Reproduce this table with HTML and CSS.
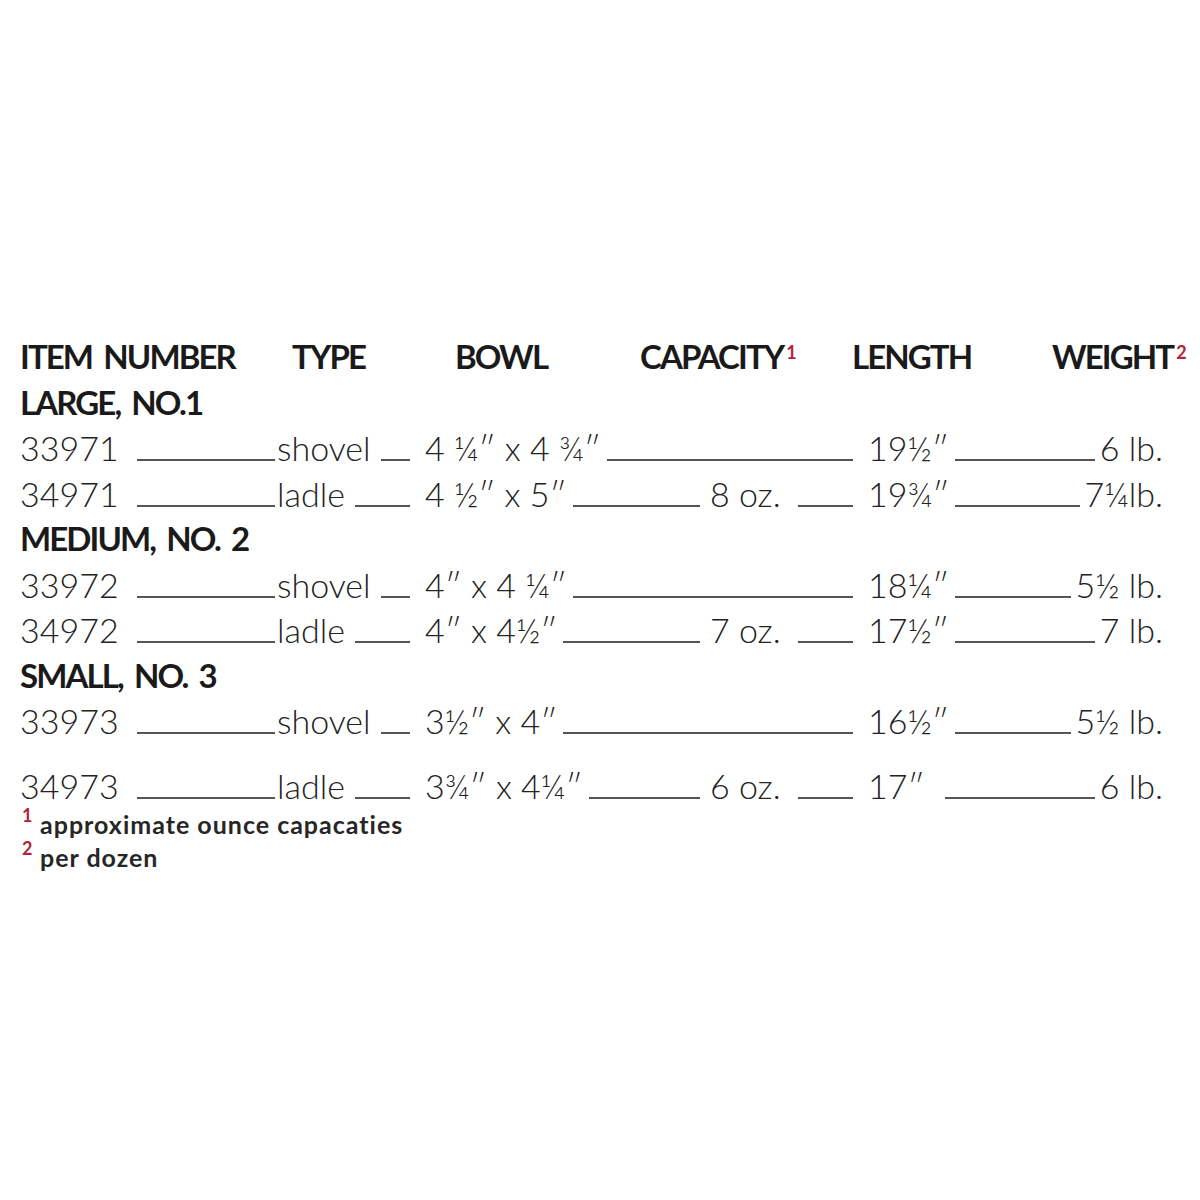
FILE: index.html
```html
<!DOCTYPE html>
<html lang="en">
<head>
<meta charset="utf-8">
<title>Ladle and shovel sizes</title>
<link rel="stylesheet" href="styles.css">
</head>
<body>
<div class="sheet">
  <div class="head">
    <span class="h-num">ITEM NUMBER</span>
    <span class="h-type">TYPE</span>
    <span class="h-bowl">BOWL</span>
    <span class="h-cap">CAPACITY<sup class="mark">1</sup></span>
    <span class="h-len">LENGTH</span>
    <span class="h-wt">WEIGHT<sup class="mark">2</sup></span>
  </div>

  <div class="group">LARGE, NO.1</div>
  <div class="row">
    <span class="num">33971</span>
    <span class="type"><i class="rule lead"></i>shovel<i class="rule after-type"></i></span>
    <span class="bowl wide">4 ¼″ x 4 ¾″<i class="rule after-bowl"></i></span>
    <span class="len">19½″<i class="rule mid"></i>6 lb.</span>
  </div>
  <div class="row">
    <span class="num">34971</span>
    <span class="type"><i class="rule lead"></i>ladle<i class="rule after-type"></i></span>
    <span class="bowl">4 ½″ x 5″<i class="rule after-bowl"></i></span>
    <span class="cap">8 oz.<i class="rule after-cap"></i></span>
    <span class="len">19¾″<i class="rule mid"></i>7¼lb.</span>
  </div>

  <div class="group">MEDIUM, NO. 2</div>
  <div class="row">
    <span class="num">33972</span>
    <span class="type"><i class="rule lead"></i>shovel<i class="rule after-type"></i></span>
    <span class="bowl wide">4″ x 4 ¼″<i class="rule after-bowl"></i></span>
    <span class="len">18¼″<i class="rule mid"></i>5½ lb.</span>
  </div>
  <div class="row">
    <span class="num">34972</span>
    <span class="type"><i class="rule lead"></i>ladle<i class="rule after-type"></i></span>
    <span class="bowl">4″ x 4½″<i class="rule after-bowl"></i></span>
    <span class="cap">7 oz.<i class="rule after-cap"></i></span>
    <span class="len">17½″<i class="rule mid"></i>7 lb.</span>
  </div>

  <div class="group">SMALL, NO. 3</div>
  <div class="row">
    <span class="num">33973</span>
    <span class="type"><i class="rule lead"></i>shovel<i class="rule after-type"></i></span>
    <span class="bowl wide">3½″ x 4″<i class="rule after-bowl"></i></span>
    <span class="len">16½″<i class="rule mid"></i>5½ lb.</span>
  </div>
  <div class="row row-last">
    <span class="num">34973</span>
    <span class="type"><i class="rule lead"></i>ladle<i class="rule after-type"></i></span>
    <span class="bowl">3¾″ x 4¼″<i class="rule after-bowl"></i></span>
    <span class="cap">6 oz.<i class="rule after-cap"></i></span>
    <span class="len">17″<i class="rule mid wide-gap"></i>6 lb.</span>
  </div>

  <div class="notes">
    <p class="note"><sup class="mark">1</sup>approximate ounce capacaties</p>
    <p class="note"><sup class="mark">2</sup>per dozen</p>
  </div>
</div>
</body>
</html>
```

FILE: styles.css
```css
html, body {
  margin: 0;
  padding: 0;
  background: #ffffff;
}

.sheet {
  padding: 334px 0 0 20px;
  width: 1180px;
  color: #222222;
  font-family: "Lato", "Liberation Sans", sans-serif;
}

.head,
.group {
  font-weight: 700;
  font-size: 33px;
  line-height: 45.5px;
  color: #1a1a1a;
  letter-spacing: -1.9px;
  word-spacing: 5px;
  white-space: nowrap;
}

.head {
  display: grid;
  grid-template-columns: 272px 163px 185px 212px 200px auto;
}

.mark {
  color: #b0243c;
  font-weight: 700;
  vertical-align: top;
  line-height: 1;
  position: relative;
  letter-spacing: 0;
}

.head .mark {
  font-size: 18px;
  margin-left: 3px;
  top: 9px;
}

.row {
  display: grid;
  grid-template-columns: 117px 273px 15px 275px 153px 15px 295px;
  font-weight: 300;
  font-size: 34px;
  line-height: 45.5px;
  white-space: nowrap;
}

.row-last {
  margin-top: 19px;
}

.num,
.type,
.bowl,
.cap,
.len {
  display: flex;
  align-items: baseline;
}

.num { grid-column: 1; }
.type { grid-column: 2; }
.bowl { grid-column: 4; }
.bowl.wide { grid-column: 4 / span 2; }
.cap { grid-column: 5; padding-left: 10px; }
.len { grid-column: 7; justify-content: space-between; }

.rule {
  display: block;
  flex: 1 1 auto;
  height: 0;
  border-bottom: 2px solid #555555;
}

.rule.lead {
  flex: 0 0 138px;
  margin-right: 2px;
}

.rule.after-type { margin-left: 10px; }
.rule.after-bowl { margin-left: 6px; }
.rule.after-cap { margin-left: 17px; }
.rule.mid { margin: 0 5px 0 6px; }
.rule.mid.wide-gap { margin-left: 20px; }

.notes {
  font-weight: 700;
  font-size: 25px;
  line-height: 33px;
  letter-spacing: 1px;
  color: #262626;
}

.note {
  margin: 0;
  white-space: nowrap;
}

.note .mark {
  font-size: 18px;
  display: inline-block;
  width: 18px;
  padding-left: 2px;
  top: -2px;
}
```
